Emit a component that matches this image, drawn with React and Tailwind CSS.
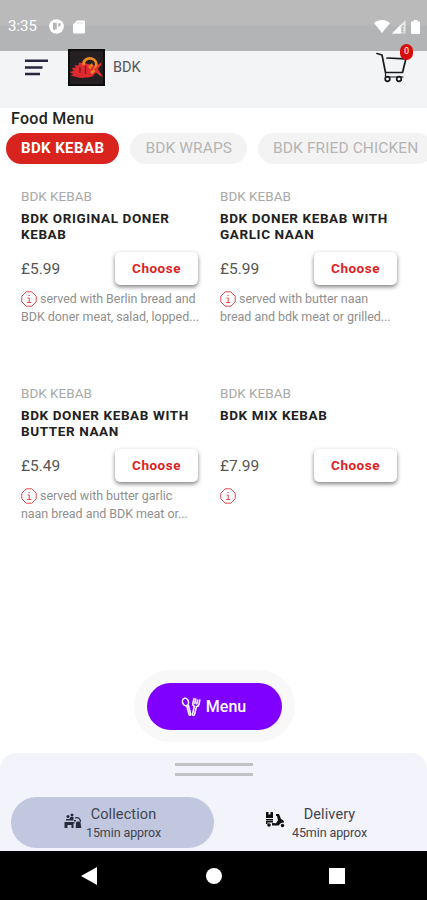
import { useState } from 'react'

const categories = ['BDK KEBAB', 'BDK WRAPS', 'BDK FRIED CHICKEN']

const items = [
  {
    id: 1,
    category: 'BDK KEBAB',
    name: ['BDK ORIGINAL DONER', 'KEBAB'],
    price: '£5.99',
    description: ['served with Berlin bread and', 'BDK doner meat, salad, lopped...'],
  },
  {
    id: 2,
    category: 'BDK KEBAB',
    name: ['BDK DONER KEBAB WITH', 'GARLIC NAAN'],
    price: '£5.99',
    description: ['served with butter naan', 'bread and bdk meat or grilled...'],
  },
  {
    id: 3,
    category: 'BDK KEBAB',
    name: ['BDK DONER KEBAB WITH', 'BUTTER NAAN'],
    price: '£5.49',
    description: ['served with butter garlic', 'naan bread and BDK meat or...'],
  },
  {
    id: 4,
    category: 'BDK KEBAB',
    name: ['BDK MIX KEBAB'],
    price: '£7.99',
    description: [],
  },
]

const StatusBar = () => (
  <div className="flex h-[51px] shrink-0 items-center bg-linear-to-b from-[#bababa] from-50% to-[#b2b4b5] to-52% pl-[8px] pr-[7px] pt-[2px] text-white">
    <span className="w-[41px] text-[15px] leading-none">3:35</span>
    <svg width="15" height="15" viewBox="0 0 15 15">
      <circle cx="7.5" cy="7.5" r="7.3" fill="white" />
      <path d="M4 3.800h3.800v6.500H6V12L4 10z" fill="#b3b5b6" />
      <path d="M9.200 4.200h2.400v2L10.400 7.400H9.200z" fill="#b3b5b6" />
    </svg>
    <svg className="ml-[9px]" width="12" height="14" viewBox="0 0 12 14">
      <path d="M4 .5h7a1 1 0 0 1 1 1v11a1 1 0 0 1-1 1H1a1 1 0 0 1-1-1v-8z" fill="white" />
      <path d="M5 2v2M7 2v2M9 2v2" stroke="#d5d6d6" strokeWidth="0.8" />
    </svg>
    <svg className="ml-auto" width="16" height="13" viewBox="0 0 16 13">
      <path d="M0 3C4.6-.9 11.4-.9 16 3L8 13z" fill="white" />
    </svg>
    <svg className="ml-px" width="15" height="14" viewBox="0 0 15 14">
      <path d="M14.5 0v13.5H1z" fill="white" fillOpacity="0.7" />
      <path d="M9.5 5v8.500H1z" fill="white" />
      <path d="M11 6v6h2.500M11 6h2.500M11 9h2" fill="none" stroke="#a9abac" strokeWidth="1" />
    </svg>
    <svg className="ml-[5px]" width="9" height="14" viewBox="0 0 9 14">
      <path d="M2.500 1.500V0h4v1.500H8a1 1 0 0 1 1 1V13a1 1 0 0 1-1 1H1a1 1 0 0 1-1-1V2.500a1 1 0 0 1 1-1z" fill="white" />
    </svg>
  </div>
)

const Logo = () => (
  <svg className="ml-[19px]" width="37" height="37" viewBox="0 0 37 37">
    <rect width="37" height="37" fill="#0d0d0d" />
    <rect x="2" y="2" width="33" height="33" fill="#242021" />
    {/* flame body */}
    <path d="M4 19l4-.5-1.500-2.500 4 .5.5-3 7 1 7 1.500 3 1 6-4-4 7 5 8.500-7-5-3.500 4-5 1-7 .5-4-1-6-1.500 3-1.500-4-2 4-1z" fill="#df2a2f" />
    <path d="M16 16c-1.500-4 3-7.500 7.500-6.500 4 1 5.500 4.500 4.500 8.500-.8 3-2.500 4.500-5 6" fill="none" stroke="#ec8a25" strokeWidth="2.800" />
    <path d="M20 17.500l4-3.500 1.200 2.500-3 4z" fill="#e67a22" />
    <path d="M12 18v6M17.500 17v8" stroke="#8c1620" strokeWidth="1.400" />
    <path d="M33 15l-6 5.500 6 6" fill="none" stroke="#e2332f" strokeWidth="1.800" />
  </svg>
)

const CartIcon = () => (
  <svg width="34" height="31" viewBox="0 0 34 31" fill="none" stroke="#16191c" strokeWidth="1.700" strokeLinecap="round" strokeLinejoin="round">
    <path d="M1 1.500l5 1.500 3.500 17.500h17l3.500-14" />
    <path d="M11 6l18.500.8" />
    <path d="M9.500 21v4h17.500" strokeWidth="1.200" />
    <circle cx="11.500" cy="27" r="2.300" />
    <circle cx="23" cy="27" r="2.300" />
  </svg>
)

const Header = () => (
  <header className="flex h-[57px] shrink-0 items-start bg-[#f3f4f6] pl-[25px] pr-[17px]">
    <svg className="mt-[8px]" width="24" height="18" viewBox="0 0 24 18" stroke="#27253f" strokeWidth="2.600">
      <path d="M0 1.800h23M0 8.500h17.500M0 15h15" />
    </svg>
    <div className="-mt-[2px]">
      <Logo />
    </div>
    <span className="ml-[8px] mt-[8px] text-[14.500px] leading-[18px] text-[#55575b]">BDK</span>
    <div className="relative ml-auto mt-px">
      <CartIcon />
      <span className="absolute -top-[8px] left-[24px] flex h-[16px] w-[13px] items-center justify-center rounded-full bg-[#d90b0b] text-[9px] font-medium text-[#ffd5d5]">
        0
      </span>
    </div>
  </header>
)

const InfoIcon = () => (
  <svg className="mr-[3px] shrink-0" width="16" height="16" viewBox="0 0 16 16" fill="none" stroke="#e2474a" strokeWidth="1">
    <path d="M5.200.8h5.600l4.400 4.400v5.600l-4.400 4.400H5.200L.8 10.800V5.200z" />
    <path d="M6.500 7h1.700v4.500M6.200 11.500h4M7.500 4.500h1.200" />
  </svg>
)

const MenuItem = ({ item }) => (
  <div className="flex h-[197px] w-[199px] flex-col pr-[22px]">
    <p className="text-[13.500px] leading-[16px] text-[#a9a9a9]">{item.category}</p>
    <h3 className="mt-[7px] h-[32px] text-[13.500px] font-bold leading-[15.500px] tracking-[0.6px] text-[#212121]">
      {item.name.map((line) => (
        <span key={line} className="block whitespace-nowrap">{line}</span>
      ))}
    </h3>
    <div className="mt-[9px] flex h-[33px] items-center justify-between">
      <span className="pt-[2px] text-[15.500px] text-[#555]">{item.price}</span>
      <button className="h-[33px] w-[83px] rounded-[5px] bg-white text-[13.500px] font-bold tracking-[0.5px] text-[#dc1f1f] shadow-[0_2px_4px_rgba(0,0,0,0.5)]">
        Choose
      </button>
    </div>
    <div className="mt-[5px] text-[12.500px] leading-[18px] tracking-[-0.050px] text-[#8f8f8f]">
      <p className="flex items-center whitespace-nowrap">
        <InfoIcon />
        {item.description[0] || '\u00a0'}
      </p>
      <p className="whitespace-nowrap">{item.description[1]}</p>
    </div>
  </div>
)

const CutleryIcon = () => (
  <svg width="20" height="20" viewBox="0 0 20 20" fill="none" stroke="white" strokeWidth="1.500" strokeLinecap="round" strokeLinejoin="round">
    <ellipse cx="4.500" cy="5" rx="3" ry="3.800" transform="rotate(-15 4.500 5)" />
    <path d="M5.800 9l2.200 8.500c.4 1.200 2 .8 1.700-.4L7.500 8.500" />
    <path d="M13 1.500l-1.200 5c-.2 1.500.5 2.400 1.600 2.700L11.500 17c-.2 1.400 1.500 1.800 2 .5l2-8c1.400 0 2.200-.8 2.500-2l.8-4.500M14.800 2l-1 4.500M16.700 3l-.9 4" />
  </svg>
)

const CollectionIcon = () => (
  <svg width="18" height="16" viewBox="0 0 18 16" fill="#242b3b">
    <circle cx="4" cy="3.500" r="1.500" />
    <circle cx="8" cy="2" r="1.500" />
    <path d="M2 6h3.500l1-2h3v3.500H2zM.5 9h10v1.500H9.500V15h-2v-3h-4v3H.5z" />
    <path d="M11 5c3-1 5.500.5 5.500 4" fill="none" stroke="#242b3b" strokeWidth="1.200" />
    <path d="M12 9.500c1-1.500 4-1.500 4.500 0l.8 5.500h-5.600zM10 7h2v1.500h-2z" />
  </svg>
)

const ScooterIcon = () => (
  <svg width="21" height="17" viewBox="0 0 21 17" fill="#111">
    <path d="M1 1h2.500v2.500h2V1H8v6H1zM1 8h7v1.500H1zM11 3h3l2 5 2.500 1.500.5 2-3 .5-2.500 2.500H7V12l4 .3 2-3L12 5h-1z" />
    <path d="M1 10h7v1.500H2.500v1.500H1z" />
    <circle cx="4" cy="14" r="1.800" />
    <circle cx="17.500" cy="14.500" r="1.700" />
  </svg>
)

const OrderSheet = ({ mode, onChange }) => (
  <div className="flex h-[98px] shrink-0 flex-col items-center rounded-t-[16px] bg-[#f2f3fb] pt-[10px]">
    <div className="flex h-[34px] w-[78px] flex-col gap-[7px]">
      <div className="h-[3px] bg-[#c1c2c6]" />
      <div className="h-[3px] bg-[#c1c2c6]" />
    </div>
    <div className="flex w-full gap-px pl-[11px]">
      <button
        onClick={() => onChange('collection')}
        className={`flex h-[51px] w-[203px] items-center rounded-full pl-[53px] text-[#40444f] ${mode === 'collection' ? 'bg-[#c0c7de]' : ''}`}
      >
        <div className="-mt-[4px]">
          <CollectionIcon />
        </div>
        <span className="ml-[4px] mt-[2px] flex flex-col items-center">
          <span className="text-[14.500px] leading-[18px] tracking-[0.1px]">Collection</span>
          <span className="text-[12.500px] leading-[18px] tracking-[-0.1px]">15min approx</span>
        </span>
      </button>
      <button
        onClick={() => onChange('delivery')}
        className={`flex h-[51px] w-[203px] items-center rounded-full pl-[50px] text-[#43454b] ${mode === 'delivery' ? 'bg-[#c0c7de]' : ''}`}
      >
        <div className="-mt-[6px]">
          <ScooterIcon />
        </div>
        <span className="ml-[6px] mt-[2px] flex flex-col items-center">
          <span className="text-[14.500px] leading-[18px] tracking-[0.1px]">Delivery</span>
          <span className="text-[12.500px] leading-[18px] tracking-[-0.1px]">45min approx</span>
        </span>
      </button>
    </div>
  </div>
)

const NavigationBar = () => (
  <div className="grid h-[49px] shrink-0 grid-cols-3 items-center bg-black pl-[22px] pr-[21px]">
    <svg className="ml-[59px]" width="17" height="18" viewBox="0 0 17 18" fill="white">
      <path d="M0 9L16 0v18z" />
    </svg>
    <svg className="mx-auto" width="16" height="16" viewBox="0 0 16 16" fill="white">
      <circle cx="8" cy="8" r="8" />
    </svg>
    <div className="ml-[51px] h-[16px] w-[16px] bg-white" />
  </div>
)

const App = () => {
  const [active, setActive] = useState('BDK KEBAB')
  const [mode, setMode] = useState('collection')

  return (
    <div className="flex h-[900px] w-[427px] flex-col overflow-hidden bg-white font-[Roboto,sans-serif]">
      <StatusBar />
      <Header />

      <h2 className="ml-[11px] mt-px h-[24px] text-[16px] font-medium leading-[20px] tracking-[0.3px] text-[#222]">Food Menu</h2>

      {/* Categories */}
      <div className="flex shrink-0 gap-[11px] pl-[6px]">
        {categories.map((category) => (
          <button
            key={category}
            onClick={() => setActive(category)}
            className={`h-[31px] shrink-0 whitespace-nowrap rounded-full px-[15px] ${
              active === category ? 'bg-[#d9231f] text-[15px] font-bold tracking-[0.4px] text-white' : 'bg-[#f3f3f3] text-[15.500px] tracking-[0.1px] text-[#b5b5b5]'
            }`}
          >
            {category}
          </button>
        ))}
      </div>

      {/* Items */}
      <div className="mt-[24px] grid shrink-0 grid-cols-[199px_199px] pl-[21px]">
        {items.map((item) => (
          <MenuItem key={item.id} item={item} />
        ))}
      </div>

      <div className="mb-[11px] ml-[134px] mt-auto flex h-[72px] w-[161px] shrink-0 items-center justify-center rounded-full bg-[#f8f8f8]">
        <button className="flex h-[47px] w-[135px] items-center justify-center gap-[5px] rounded-full bg-[#8000ff] pr-[2px] pt-px text-[16px] font-medium text-white">
          <CutleryIcon />
          Menu
        </button>
      </div>

      <OrderSheet mode={mode} onChange={setMode} />
      <NavigationBar />
    </div>
  )
}

export default App
